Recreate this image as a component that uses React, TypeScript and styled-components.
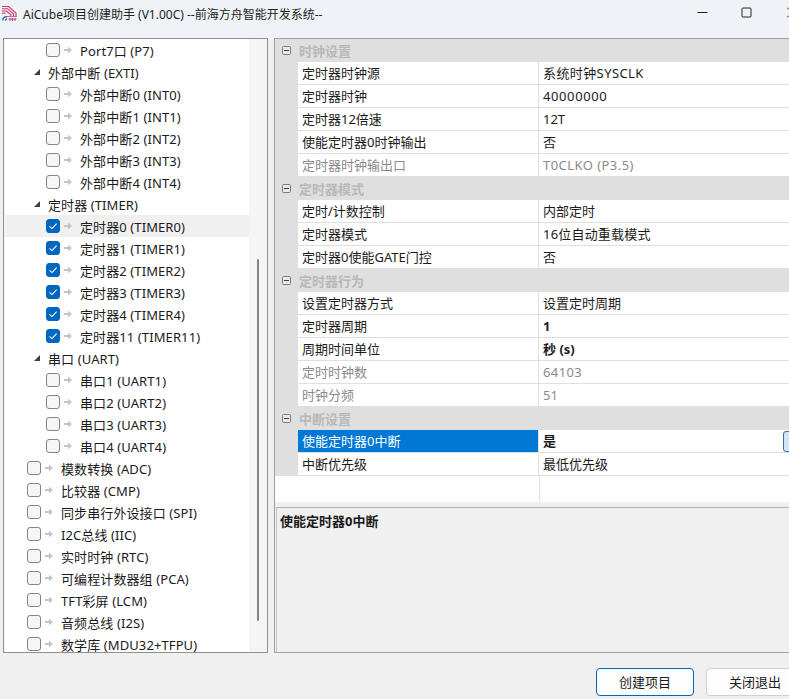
import styled, { createGlobalStyle } from 'styled-components';

const GlobalStyle = createGlobalStyle`
  html, body {
    margin: 0;
    padding: 0;
    background: #f0f0f0;
  }
  * {
    box-sizing: border-box;
  }
`;

const Window = styled.div`
  width: 789px;
  height: 699px;
  overflow: hidden;
  background: #f0f0f0;
  color: #1a1a1a;
  font-family: "Noto Sans", "Noto Sans CJK SC", sans-serif;
  font-size: 13px;
`;

const TitleBar = styled.div`
  height: 38px;
  background: #eff3f8;
  display: flex;
  align-items: flex-start;
  padding: 5px 0 0 2px;
`;

const TitleText = styled.div`
  margin-left: 6px;
  padding-top: 1px;
  line-height: 17px;
  font-size: 12px;
  color: #222;
  white-space: nowrap;
  flex: 1;
`;

const WinButton = styled.div<{ $edge?: boolean }>`
  width: ${p => (p.$edge ? 21 : 44)}px;
  height: 14px;
  flex: none;
  display: flex;
  align-items: center;
  justify-content: ${p => (p.$edge ? 'flex-end' : 'center')};
`;

const Body = styled.div`
  display: flex;
  height: 615px;
  padding-left: 3px;
  gap: 6px;
`;

const TreePanel = styled.div`
  width: 265px;
  flex: none;
  position: relative;
  border: 1px solid #8f8f8f;
  background: #f5f5f5;
  overflow: hidden;
`;

const TreeList = styled.div`
  width: 244px;
  height: 100%;
  background: #fff;
  margin-left: 1px;
  overflow: hidden;
  letter-spacing: 0.1px;
`;

const TreeRow = styled.div<{ $level: number; $active?: boolean }>`
  height: 22px;
  display: flex;
  align-items: center;
  white-space: nowrap;
  padding-left: ${p => (p.$level === 2 ? 41 : p.$level === 1 ? 22 : 29)}px;
  background: ${p => (p.$active ? '#f0f0f0' : 'transparent')};
`;

const Check = styled.span<{ $on?: boolean }>`
  width: 14px;
  height: 14px;
  flex: none;
  border-radius: 3px;
  display: flex;
  align-items: center;
  justify-content: center;
  border: 1px solid ${p => (p.$on ? '#0067c0' : '#858585')};
  background: ${p => (p.$on ? '#0067c0' : '#f6f6f6')};
`;

const ArrowSlot = styled.span`
  width: 10px;
  height: 10px;
  flex: none;
  margin: 0 7px 0 3px;
  display: flex;
`;

const Caret = styled.span`
  width: 6px;
  height: 6px;
  flex: none;
  margin-right: 8px;
  display: flex;
`;

const ScrollThumb = styled.div`
  position: absolute;
  left: 253px;
  top: 220px;
  width: 2px;
  height: 362px;
  background: #858585;
  border-radius: 1px;
`;

const PropsPanel = styled.div`
  width: 530px;
  flex: none;
  border: 1px solid #a0a0a0;
  display: flex;
  flex-direction: column;
  background: #f0f0f0;
`;

const Grid = styled.div`
  height: 463px;
  flex: none;
  background: #fff;
`;

const GroupHead = styled.div`
  height: 23px;
  background: #dfdfdf;
  display: flex;
  align-items: center;
  font-weight: 700;
  color: #b8b8b8;
`;

const GroupToggle = styled.span`
  width: 23px;
  flex: none;
  display: flex;
  justify-content: center;
  margin-right: 1px;
`;

const PropRow = styled.div`
  height: 23px;
  display: flex;
  background: #dfdfdf;
`;

const Gutter = styled.span`
  width: 23px;
  flex: none;
`;

const NameCell = styled.div<{ $selected?: boolean; $disabled?: boolean }>`
  width: 241px;
  flex: none;
  padding-left: 4px;
  line-height: 22px;
  border-right: 1px solid #dfdfdf;
  border-bottom: 1px solid #dfdfdf;
  background: ${p => (p.$selected ? '#0078d4' : '#fff')};
  color: ${p => (p.$selected ? '#fff' : p.$disabled ? '#8a8a8a' : '#1a1a1a')};
`;

const ValueCell = styled.div<{ $bold?: boolean; $disabled?: boolean }>`
  flex: 1;
  display: flex;
  justify-content: space-between;
  padding-left: 4px;
  line-height: 22px;
  border-bottom: 1px solid #dfdfdf;
  background: #fff;
  font-weight: ${p => (p.$bold ? 700 : 400)};
  color: ${p => (p.$disabled ? '#8a8a8a' : '#1a1a1a')};
`;

const ValueText = styled.span<{ $tracking?: number }>`
  letter-spacing: ${p => p.$tracking ?? 0}px;
`;

const EditButton = styled.span`
  width: 22px;
  height: 21px;
  flex: none;
  margin: 1px -2px 0 0;
  border: 1px solid #3c6ea5;
  border-radius: 3px;
  background: #d3e6f8;
`;

const EmptyRow = styled.div`
  height: 26px;
  display: flex;
  padding-left: 264px;
`;

const EmptyDivider = styled.span`
  width: 1px;
  background: #dfdfdf;
`;

const Description = styled.div`
  flex: 1;
  margin: 5px 0 0 1px;
  border-top: 1px solid #b0b0b0;
  border-left: 1px solid #c4c4c4;
  background: #f0f0f0;
  padding: 4px 3px;
  font-weight: 700;
  line-height: 18px;
`;

const Footer = styled.div`
  display: flex;
  gap: 12px;
  padding: 15px 0 0 596px;
`;

const ActionButton = styled.div<{ $primary?: boolean }>`
  width: 98px;
  height: 28px;
  flex: none;
  text-align: center;
  line-height: 26px;
  background: #fdfdfd;
  border-radius: 4px;
  border: 1px solid ${p => (p.$primary ? '#0067c0' : '#d0d0d0')};
`;

const Logo = () => (
  <svg width="15" height="15" viewBox="0 0 15 15" style={{ marginTop: 1, flex: 'none' }}>
    <g fill="none" stroke="#d0375f" strokeWidth="1.1">
      <path d="M0 0.5H6.5L14 7V11" />
      <path d="M0 2.7H5.5L11.5 8V11" />
      <path d="M0 5H4.5L9 9V11" />
      <path d="M0 7.2H3.5" />
    </g>
    <path d="M5 10.5H15" stroke="#d9627e" strokeWidth="1" />
    <g fill="none" stroke="#1f5fb5" strokeWidth="1.3">
      <path d="M0.8 14.5C0.8 11.8 2.6 10.6 5 10.6" />
      <path d="M3.6 14.5C3.6 13.6 4.2 13 5 13" />
    </g>
    <path d="M8 12V15M10.5 12V15M13 12V15M6.5 13H14.5" fill="none" stroke="#b04a8a" strokeWidth="1" />
  </svg>
);

const TickIcon = () => (
  <svg width="10" height="10" viewBox="0 0 10 10">
    <path d="M1.5 5.4L4 7.6L8.6 2.6" fill="none" stroke="#fff" strokeWidth="1.1" />
  </svg>
);

const ArrowIcon = () => (
  <svg width="10" height="10" viewBox="0 0 10 10">
    <path d="M1 4H5V1.5L9 5L5 8.5V6H1Z" fill="#c4c4c4" />
  </svg>
);

const CaretIcon = () => (
  <svg width="6" height="6" viewBox="0 0 6 6">
    <path d="M0 6H6V0Z" fill="#404040" />
  </svg>
);

const MinusBox = () => (
  <svg width="9" height="9" viewBox="0 0 9 9">
    <rect x="0.5" y="0.5" width="8" height="8" rx="1" fill="#e8e8e8" stroke="#7a7a7a" />
    <path d="M2 4.5H7" stroke="#404040" />
  </svg>
);

type TreeItem = { label: string; level: number; on?: boolean; active?: boolean; group?: boolean };

const treeItems: TreeItem[] = [
  { label: 'Port7口 (P7)', level: 2 },
  { label: '外部中断 (EXTI)', level: 0, group: true },
  { label: '外部中断0 (INT0)', level: 2 },
  { label: '外部中断1 (INT1)', level: 2 },
  { label: '外部中断2 (INT2)', level: 2 },
  { label: '外部中断3 (INT3)', level: 2 },
  { label: '外部中断4 (INT4)', level: 2 },
  { label: '定时器 (TIMER)', level: 0, group: true },
  { label: '定时器0 (TIMER0)', level: 2, on: true, active: true },
  { label: '定时器1 (TIMER1)', level: 2, on: true },
  { label: '定时器2 (TIMER2)', level: 2, on: true },
  { label: '定时器3 (TIMER3)', level: 2, on: true },
  { label: '定时器4 (TIMER4)', level: 2, on: true },
  { label: '定时器11 (TIMER11)', level: 2, on: true },
  { label: '串口 (UART)', level: 0, group: true },
  { label: '串口1 (UART1)', level: 2 },
  { label: '串口2 (UART2)', level: 2 },
  { label: '串口3 (UART3)', level: 2 },
  { label: '串口4 (UART4)', level: 2 },
  { label: '模数转换 (ADC)', level: 1 },
  { label: '比较器 (CMP)', level: 1 },
  { label: '同步串行外设接口 (SPI)', level: 1 },
  { label: 'I2C总线 (IIC)', level: 1 },
  { label: '实时时钟 (RTC)', level: 1 },
  { label: '可编程计数器组 (PCA)', level: 1 },
  { label: 'TFT彩屏 (LCM)', level: 1 },
  { label: '音频总线 (I2S)', level: 1 },
  { label: '数学库 (MDU32+TFPU)', level: 1 },
];

type Prop = {
  name: string;
  value: string;
  disabled?: boolean;
  bold?: boolean;
  selected?: boolean;
  tracking?: number;
};
type Group = { title: string; props: Prop[] };

const groups: Group[] = [
  {
    title: '时钟设置',
    props: [
      { name: '定时器时钟源', value: '系统时钟SYSCLK', tracking: 0.4 },
      { name: '定时器时钟', value: '40000000', tracking: 0.6 },
      { name: '定时器12倍速', value: '12T' },
      { name: '使能定时器0时钟输出', value: '否' },
      { name: '定时器时钟输出口', value: 'T0CLKO (P3.5)', disabled: true, tracking: 0.45 },
    ],
  },
  {
    title: '定时器模式',
    props: [
      { name: '定时/计数控制', value: '内部定时' },
      { name: '定时器模式', value: '16位自动重载模式', tracking: 0.2 },
      { name: '定时器0使能GATE门控', value: '否' },
    ],
  },
  {
    title: '定时器行为',
    props: [
      { name: '设置定时器方式', value: '设置定时周期' },
      { name: '定时器周期', value: '1', bold: true },
      { name: '周期时间单位', value: '秒 (s)', bold: true },
      { name: '定时时钟数', value: '64103', disabled: true, tracking: 0.4 },
      { name: '时钟分频', value: '51', disabled: true },
    ],
  },
  {
    title: '中断设置',
    props: [
      { name: '使能定时器0中断', value: '是', bold: true, selected: true },
      { name: '中断优先级', value: '最低优先级' },
    ],
  },
];

const App = () => {
  return (
    <Window>
      <GlobalStyle />
      <TitleBar>
        <Logo />
        <TitleText>AiCube项目创建助手 (V1.00C) --前海方舟智能开发系统--</TitleText>
        <WinButton>
          <svg width="11" height="11" viewBox="0 0 11 11">
            <path d="M0.5 5.5H10.5" stroke="#222" />
          </svg>
        </WinButton>
        <WinButton>
          <svg width="11" height="11" viewBox="0 0 11 11">
            <rect x="1" y="1" width="9" height="9" rx="1" fill="none" stroke="#222" />
          </svg>
        </WinButton>
        <WinButton $edge>
          <svg width="2" height="11" viewBox="0 0 2 11">
            <path d="M0 0.5L2 2.5M0 10.5L2 8.5" fill="none" stroke="#222" />
          </svg>
        </WinButton>
      </TitleBar>
      <Body>
        <TreePanel>
          <TreeList>
            {treeItems.map(item => (
              <TreeRow key={item.label} $level={item.level} $active={item.active}>
                {item.group ? (
                  <Caret>
                    <CaretIcon />
                  </Caret>
                ) : (
                  <>
                    <Check $on={item.on}>{item.on && <TickIcon />}</Check>
                    <ArrowSlot>
                      <ArrowIcon />
                    </ArrowSlot>
                  </>
                )}
                {item.label}
              </TreeRow>
            ))}
          </TreeList>
          <ScrollThumb />
        </TreePanel>
        <PropsPanel>
          <Grid>
            {groups.map(group => (
              <div key={group.title}>
                <GroupHead>
                  <GroupToggle>
                    <MinusBox />
                  </GroupToggle>
                  {group.title}
                </GroupHead>
                {group.props.map(prop => (
                  <PropRow key={prop.name}>
                    <Gutter />
                    <NameCell $selected={prop.selected} $disabled={prop.disabled}>
                      {prop.name}
                    </NameCell>
                    <ValueCell $bold={prop.bold} $disabled={prop.disabled}>
                      <ValueText $tracking={prop.tracking}>{prop.value}</ValueText>
                      {prop.selected && <EditButton />}
                    </ValueCell>
                  </PropRow>
                ))}
              </div>
            ))}
            <EmptyRow>
              <EmptyDivider />
            </EmptyRow>
          </Grid>
          <Description>使能定时器0中断</Description>
        </PropsPanel>
      </Body>
      <Footer>
        <ActionButton $primary>创建项目</ActionButton>
        <ActionButton>关闭退出</ActionButton>
      </Footer>
    </Window>
  );
};

export default App;
